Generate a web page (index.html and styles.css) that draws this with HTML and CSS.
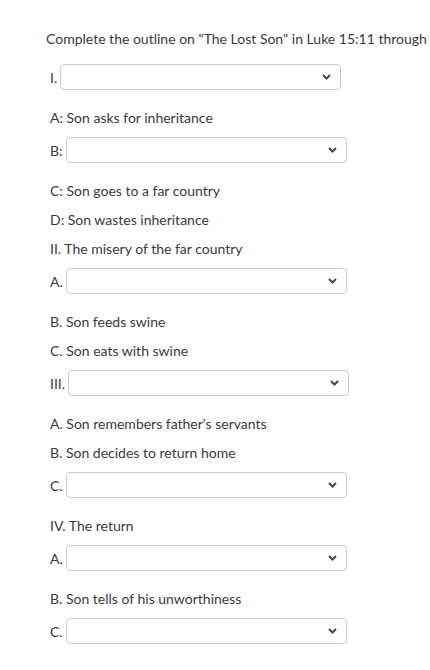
FILE: index.html
```html
<!DOCTYPE html>
<html>
<head>
<meta charset="utf-8">
<link rel="stylesheet" href="styles.css">
</head>
<body>
<div class="page">
  <p class="title">Complete the outline on "The Lost Son" in Luke 15:11 through</p>
  <div class="items">
    <div class="row sel"><span class="lbl">I.</span><span class="box"><svg class="chev" width="9" height="6" viewBox="0 0 9 6"><path d="M1 1 L4.5 4.5 L8 1" fill="none" stroke="#444" stroke-width="2"/></svg></span></div>
    <div class="row txt">A: Son asks for inheritance</div>
    <div class="row sel"><span class="lbl">B:</span><span class="box"><svg class="chev" width="9" height="6" viewBox="0 0 9 6"><path d="M1 1 L4.5 4.5 L8 1" fill="none" stroke="#444" stroke-width="2"/></svg></span></div>
    <div class="row txt">C: Son goes to a far country</div>
    <div class="row txt">D: Son wastes inheritance</div>
    <div class="row txt">II. The misery of the far country</div>
    <div class="row sel"><span class="lbl">A.</span><span class="box"><svg class="chev" width="9" height="6" viewBox="0 0 9 6"><path d="M1 1 L4.5 4.5 L8 1" fill="none" stroke="#444" stroke-width="2"/></svg></span></div>
    <div class="row txt">B. Son feeds swine</div>
    <div class="row txt">C. Son eats with swine</div>
    <div class="row sel"><span class="lbl">III.</span><span class="box"><svg class="chev" width="9" height="6" viewBox="0 0 9 6"><path d="M1 1 L4.5 4.5 L8 1" fill="none" stroke="#444" stroke-width="2"/></svg></span></div>
    <div class="row txt">A. Son remembers father's servants</div>
    <div class="row txt">B. Son decides to return home</div>
    <div class="row sel"><span class="lbl">C.</span><span class="box"><svg class="chev" width="9" height="6" viewBox="0 0 9 6"><path d="M1 1 L4.5 4.5 L8 1" fill="none" stroke="#444" stroke-width="2"/></svg></span></div>
    <div class="row txt">IV. The return</div>
    <div class="row sel"><span class="lbl">A.</span><span class="box"><svg class="chev" width="9" height="6" viewBox="0 0 9 6"><path d="M1 1 L4.5 4.5 L8 1" fill="none" stroke="#444" stroke-width="2"/></svg></span></div>
    <div class="row txt">B. Son tells of his unworthiness</div>
    <div class="row sel"><span class="lbl">C.</span><span class="box"><svg class="chev" width="9" height="6" viewBox="0 0 9 6"><path d="M1 1 L4.5 4.5 L8 1" fill="none" stroke="#444" stroke-width="2"/></svg></span></div>
  </div>
</div>
</body>
</html>
```
FILE: styles.css
```css
html, body {
  margin: 0;
  padding: 0;
  background: #fff;
}
.page {
  font-family: Lato, "Liberation Sans", sans-serif;
  font-size: 14px;
  color: #3a3a3a;
  padding: 29px 0 0 46px;
}
.title {
  margin: 0 0 16px 0;
  line-height: 19px;
  white-space: nowrap;
}
.items {
  display: flex;
  flex-direction: column;
  gap: 10px;
  padding-left: 4px;
}
.row {
  line-height: 19px;
}
.sel {
  display: flex;
  align-items: center;
  gap: 3px;
  height: 26px;
  margin-bottom: 8px;
}
.box {
  position: relative;
  display: block;
  width: 279px;
  height: 24px;
  border: 1px solid #ccc;
  border-radius: 4px;
  background: #fff;
}
.chev {
  position: absolute;
  right: 9px;
  top: 9px;
}
```
